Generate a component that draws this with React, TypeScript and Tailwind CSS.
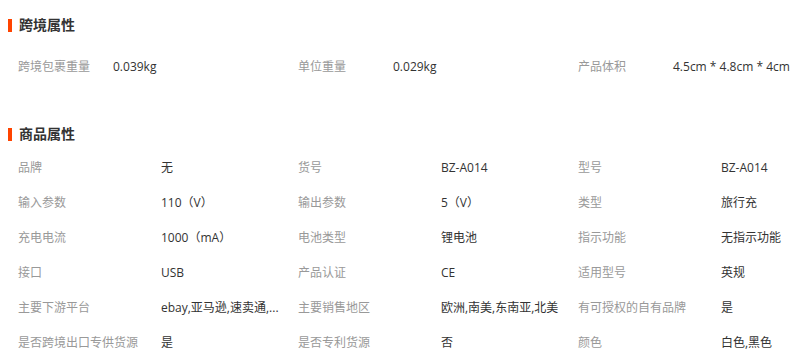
import React from "react";

const font = { fontFamily: '"Open Sans", "Noto Sans CJK SC", sans-serif' };

type Pair = [string, string];

function Title({ text }: { text: string }) {
  return (
    <div className="flex h-[20px] items-center">
      <div className="ml-[8px] h-[13px] w-[4px] bg-[#ff4400]" />
      <div className="ml-[7px] text-[14px] font-bold leading-[20px] text-[#333]">{text}</div>
    </div>
  );
}

const rows2: Pair[][] = [
  [["品牌", "无"], ["货号", "BZ-A014"], ["型号", "BZ-A014"]],
  [["输入参数", "110（V）"], ["输出参数", "5（V）"], ["类型", "旅行充"]],
  [["充电电流", "1000（mA）"], ["电池类型", "锂电池"], ["指示功能", "无指示功能"]],
  [["接口", "USB"], ["产品认证", "CE"], ["适用型号", "英规"]],
  [["主要下游平台", "ebay,亚马逊,速卖通,..."], ["主要销售地区", "欧洲,南美,东南亚,北美"], ["有可授权的自有品牌", "是"]],
  [["是否跨境出口专供货源", "是"], ["是否专利货源", "否"], ["颜色", "白色,黑色"]],
];

export default function App() {
  return (
    <div className="h-[360px] w-[812px] overflow-hidden bg-white" style={font}>
      <div className="pt-[15px]">
        <Title text="跨境属性" />
      </div>
      <div className="mt-[14px]">
        <div className="flex h-[35px] items-center pl-[18px]">
          {[
            ["跨境包裹重量", "0.039kg"],
            ["单位重量", "0.029kg"],
            ["产品体积", "4.5cm * 4.8cm * 4cm"],
          ].map(([k, v], i) => (
            <div key={i} className="flex items-center">
              <div className="w-[95px] whitespace-nowrap text-[12px] text-[#999]">{k}</div>
              <div className="w-[185px] whitespace-nowrap text-[12px] text-[#333]">{v}</div>
            </div>
          ))}
        </div>
      </div>
      <div className="mt-[40px]">
        <Title text="商品属性" />
      </div>
      <div className="mt-[6px]">
        {rows2.map((r, i) => (
          <div key={i} className="flex h-[35px] items-center pl-[18px]">
            {r.map(([k, v], j) => (
              <div key={j} className="flex items-center">
                <div className="w-[143px] whitespace-nowrap text-[12px] text-[#999]">{k}</div>
                <div className="w-[137px] overflow-hidden whitespace-nowrap text-[12px] text-[#333]">{v}</div>
              </div>
            ))}
          </div>
        ))}
      </div>
    </div>
  );
}
